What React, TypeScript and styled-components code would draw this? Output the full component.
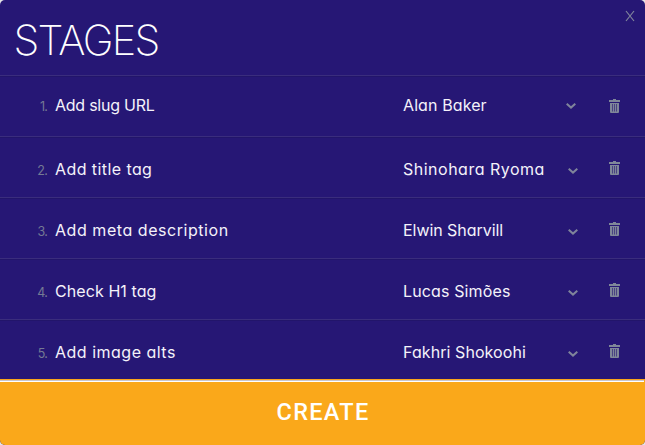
import React from "react";
import styled, { createGlobalStyle } from "styled-components";

const GlobalStyle = createGlobalStyle`
  * { box-sizing: border-box; }
  body { margin: 0; background: #e4e4e6; }
`;

const Dialog = styled.main`
  width: 645px;
  height: 445px;
  display: flex;
  flex-direction: column;
  overflow: hidden;
  border-radius: 5px;
  background: #261775;
  color: #f4f2fa;
  font-family: Inter, "Noto Sans", sans-serif;
  font-feature-settings: "cv11" 1;
`;

const Header = styled.header`
  height: 75px;
  flex: none;
  display: flex;
  justify-content: space-between;
  padding: 10px 10px 0 13.5px;
`;

const Title = styled.h1`
  margin: 0;
  font-size: 41.5px;
  line-height: 60px;
  font-weight: 200;
  letter-spacing: -1.75px;
  color: #fff;
`;

const Close = styled.button`
  width: 10px;
  height: 12px;
  padding: 0;
  border: 0;
  background: none;
  display: flex;
  color: #81859c;
`;

const List = styled.ol`
  margin: 0;
  padding: 0;
  list-style: none;
  height: 304px;
  flex: none;
  overflow: hidden;
`;

const Row = styled.li<{ $first: boolean }>`
  height: 61px;
  display: grid;
  grid-template-columns: 55px 348px 163px 43px 1fr;
  border-top: 1px solid #3a2d7d;
  box-shadow: inset 0 1px #22156a;
  padding-top: ${(p) => (p.$first ? 17 : 20)}px;
`;

const Num = styled.span`
  text-align: right;
  padding-right: 8px;
  font-size: 12.5px;
  line-height: 27px;
  font-weight: 400;
  letter-spacing: -0.8px;
  color: #757a94;
`;

const Label = styled.span<{ $spacing: number }>`
  font-size: 16px;
  line-height: 24px;
  white-space: nowrap;
  letter-spacing: ${(p) => p.$spacing}px;
`;

const Toggle = styled.span<{ $first: boolean }>`
  display: flex;
  height: 6px;
  margin: ${(p) => (p.$first ? "10px 0 0 0" : "11px 0 0 2px")};
  color: #7f849b;
`;

const Remove = styled.span<{ $first: boolean }>`
  display: flex;
  height: 14px;
  margin-top: ${(p) => (p.$first ? 6 : 4)}px;
  color: #7f8799;
`;

const Create = styled.button`
  height: 66px;
  flex: none;
  display: flex;
  flex-direction: column;
  padding: 0;
  border: 0;
  border-top: 1px solid #faa61a;
  background: #faa81a;
  color: #fff;
`;

const Highlight = styled.span`
  width: 644px;
  height: 2px;
  border-top: 1px solid #c9c6cc;
  background: #fff;
`;

const CreateLabel = styled.span`
  align-self: center;
  font: 500 23.5px/28px Roboto, sans-serif;
  letter-spacing: 1.3px;
  margin: 16px 0 0 1px;
`;

const stages = [
  { task: "Add slug URL", taskGap: -0.25, owner: "Alan Baker", ownerGap: 0.1 },
  { task: "Add title tag", taskGap: 0.42, owner: "Shinohara Ryoma", ownerGap: 0.5 },
  { task: "Add meta description", taskGap: 0.55, owner: "Elwin Sharvill", ownerGap: -0.05 },
  { task: "Check H1 tag", taskGap: 0.08, owner: "Lucas Simões", ownerGap: 0.13 },
  { task: "Add image alts", taskGap: 0.5, owner: "Fakhri Shokoohi", ownerGap: 0.08 },
];

const CloseIcon = () => (
  <svg width="10" height="12" viewBox="0 0 10 12" fill="none" stroke="currentColor" strokeWidth="1.2">
    <path d="M1 1 9 11M9 1 1 11" />
  </svg>
);

const ChevronIcon = () => (
  <svg width="10" height="6" viewBox="0 0 10 6" fill="none" stroke="currentColor" strokeWidth="2">
    <path d="M.7.8 5 4.6 9.3.8" />
  </svg>
);

const TrashIcon = () => (
  <svg width="11" height="14" viewBox="0 0 11 14" fill="currentColor">
    <path d="M4 0h3v1h4v2H0V1h4z" />
    <path fillRule="evenodd" d="M1 4h9v9q0 1-1 1H2q-1 0-1-1zM3 5v7.500h.6V5zM5.200 5v7.500h.6V5zM7.400 5v7.500H8V5z" />
  </svg>
);

export default function App() {
  return (
    <>
      <GlobalStyle />
      <Dialog>
        <Header>
          <Title>STAGES</Title>
          <Close aria-label="Close"><CloseIcon /></Close>
        </Header>
        <List>
          {stages.map((s, i) => (
            <Row key={s.task} $first={i === 0}>
              <Num>{i + 1}.</Num>
              <Label $spacing={s.taskGap}>{s.task}</Label>
              <Label $spacing={s.ownerGap}>{s.owner}</Label>
              <Toggle $first={i === 0}><ChevronIcon /></Toggle>
              <Remove $first={i === 0}><TrashIcon /></Remove>
            </Row>
          ))}
        </List>
        <Create>
          <Highlight />
          <CreateLabel>CREATE</CreateLabel>
        </Create>
      </Dialog>
    </>
  );
}
